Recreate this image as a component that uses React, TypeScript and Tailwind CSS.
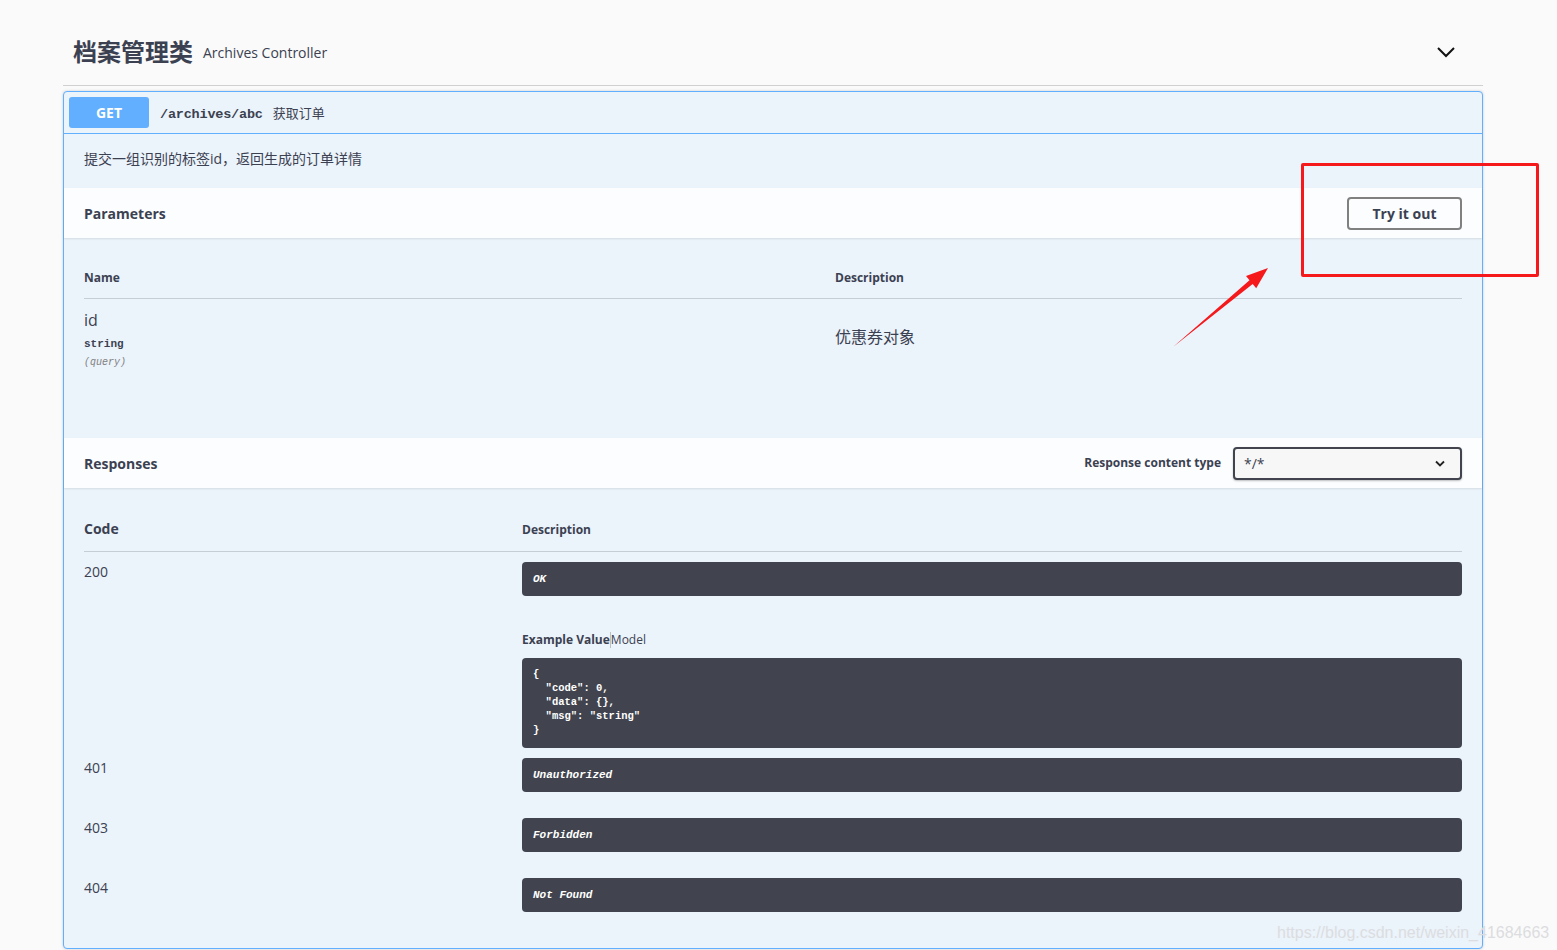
import React from "react";

const sans = { fontFamily: '"Open Sans", "Noto Sans CJK SC", sans-serif' };

const RESPONSES = [
  { code: "401", desc: "Unauthorized" },
  { code: "403", desc: "Forbidden" },
  { code: "404", desc: "Not Found" },
];

function DarkBox({ children }: { children: React.ReactNode }) {
  return (
    <div className="h-[34px] rounded-[4px] bg-[#41444e] px-[11px] flex items-center">
      <span className="text-white text-[11px] font-bold italic font-['Liberation_Mono',monospace]">
        {children}
      </span>
    </div>
  );
}

export default function App() {
  return (
    <div className="relative min-h-[950px] bg-[#fafafa] text-[#3b4151] overflow-hidden" style={sans}>
      <div className="ml-[63px] w-[1420px] pt-[21px]">
        {/* Tag header */}
        <div className="h-[65px] flex items-center border-b border-[#d0d0d0] pl-[10px] pr-[27px] pb-[2px]">
          <h3 className="text-[24px] font-bold leading-none">档案管理类</h3>
          <span className="ml-[10px] text-[14px]">Archives Controller</span>
          <svg className="ml-auto" width="20" height="12" viewBox="0 0 20 12">
            <path d="M2 2 L10 10 L18 2" fill="none" stroke="#111" strokeWidth="2" />
          </svg>
        </div>

        {/* Opblock */}
        <div className="mt-[5px] border border-[#61affe] rounded-[4px] bg-[#ebf3fb] shadow-[0_0_3px_rgba(0,0,0,0.19)]">
          {/* Summary */}
          <div className="flex items-center p-[5px] border-b border-[#61affe]">
            <div className="w-[80px] h-[31px] rounded-[3px] bg-[#61affe] text-white text-[14px] font-bold flex items-center justify-center">
              GET
            </div>
            <span className="ml-[11px] pt-[5px] text-[13.5px] font-semibold font-['Liberation_Mono',monospace] text-[#3b4151] tracking-[-0.2px]">
              /archives/abc
            </span>
            <span className="ml-[10px] pt-[2px] text-[13px]">获取订单</span>
          </div>

          {/* Description */}
          <div className="h-[54px] px-5 pb-[5px] flex items-center text-[14px]">
            提交一组识别的标签id，返回生成的订单详情
          </div>

          {/* Parameters header */}
          <div className="h-[50px] px-5 flex items-center bg-white/80 shadow-[0_1px_2px_rgba(0,0,0,0.1)]">
            <h4 className="text-[14px] font-bold">Parameters</h4>
            <button className="ml-auto w-[115px] h-[33px] border-2 border-[#808080] rounded-[4px] text-[14px] font-bold bg-transparent">
              Try it out
            </button>
          </div>

          {/* Parameters table */}
          <div className="px-5 pt-8 h-[200px]">
            <div className="flex border-b border-[#c7cdd6] pb-3 text-[12px] font-bold leading-4">
              <div className="w-[751px]">Name</div>
              <div>Description</div>
            </div>
            <div className="flex">
              <div className="w-[751px] pt-[11px]">
                <div className="text-[16px] leading-5">id</div>
                <div className="text-[11px] font-bold leading-4 mt-[6px] font-['Liberation_Mono',monospace]">string</div>
                <div className="text-[10px] italic leading-4 mt-[3px] text-[#808080] font-['Liberation_Mono',monospace]">(query)</div>
              </div>
              <div className="pt-[28px] text-[16px] leading-5">优惠券对象</div>
            </div>
          </div>

          {/* Responses header */}
          <div className="h-[50px] px-5 flex items-center bg-white/80 shadow-[0_1px_2px_rgba(0,0,0,0.1)]">
            <h4 className="text-[14px] font-bold">Responses</h4>
            <span className="ml-auto text-[12px] font-bold">Response content type</span>
            <div className="ml-3 w-[229px] h-[33px] border-2 border-[#41444e] rounded-[4px] bg-[#f7f7f7] flex items-center px-[9px] shadow-[0_1px_2px_rgba(0,0,0,0.25)]">
              <span className="text-[14px]">*/*</span>
              <svg className="ml-auto mr-[6px]" width="10" height="7" viewBox="0 0 10 7">
                <path d="M1 1.5 L5 5.5 L9 1.5" fill="none" stroke="#222" strokeWidth="1.8" />
              </svg>
            </div>
          </div>

          {/* Responses table */}
          <div className="px-5 pt-[31px] pb-5">
            <div className="flex items-end border-b border-[#c7cdd6] pb-3">
              <div className="w-[438px] text-[14px] font-bold leading-5">Code</div>
              <div className="text-[12px] font-bold leading-4 pb-[1px]">Description</div>
            </div>

            <div className="flex pt-[10px]">
              <div className="w-[438px] text-[14px] leading-5">200</div>
              <div className="flex-1">
                <DarkBox>OK</DarkBox>
                <div className="mt-9 text-[12px] leading-4 flex items-center">
                  <span className="font-bold">Example Value</span>
                  <span className="w-px h-[16px] bg-[#c0c0c0]" />
                  <span>Model</span>
                </div>
                <pre className="mt-[10px] h-[90px] rounded-[4px] bg-[#41444e] text-white px-[11px] pt-[9px] text-[10.5px] font-bold leading-[14px] font-['Liberation_Mono',monospace]">
{`{
  "code": 0,
  "data": {},
  "msg": "string"
}`}
                </pre>
              </div>
            </div>

            {RESPONSES.map((r) => (
              <div key={r.code} className="flex pt-[10px] pb-4">
                <div className="w-[438px] text-[14px] leading-5">{r.code}</div>
                <div className="flex-1">
                  <DarkBox>{r.desc}</DarkBox>
                </div>
              </div>
            ))}
          </div>
        </div>
      </div>

      {/* Annotation overlays */}
      <div className="absolute left-[1301px] top-[163px] w-[238px] h-[114px] border-[3px] border-[#f5191c] rounded-[2px]" />
      <svg className="absolute left-0 top-0 pointer-events-none" width="1557" height="950">
        <polygon
          points="1173,347 1249.5,280.2 1246,276 1268,268 1256.2,288.2 1252.7,284"
          fill="#f5191c"
        />
      </svg>
      <div className="absolute left-[1277px] top-[921px] text-[16px] text-[#dcdde0] font-['Liberation_Sans',sans-serif]">
        https://blog.csdn.net/weixin_41684663
      </div>
    </div>
  );
}
